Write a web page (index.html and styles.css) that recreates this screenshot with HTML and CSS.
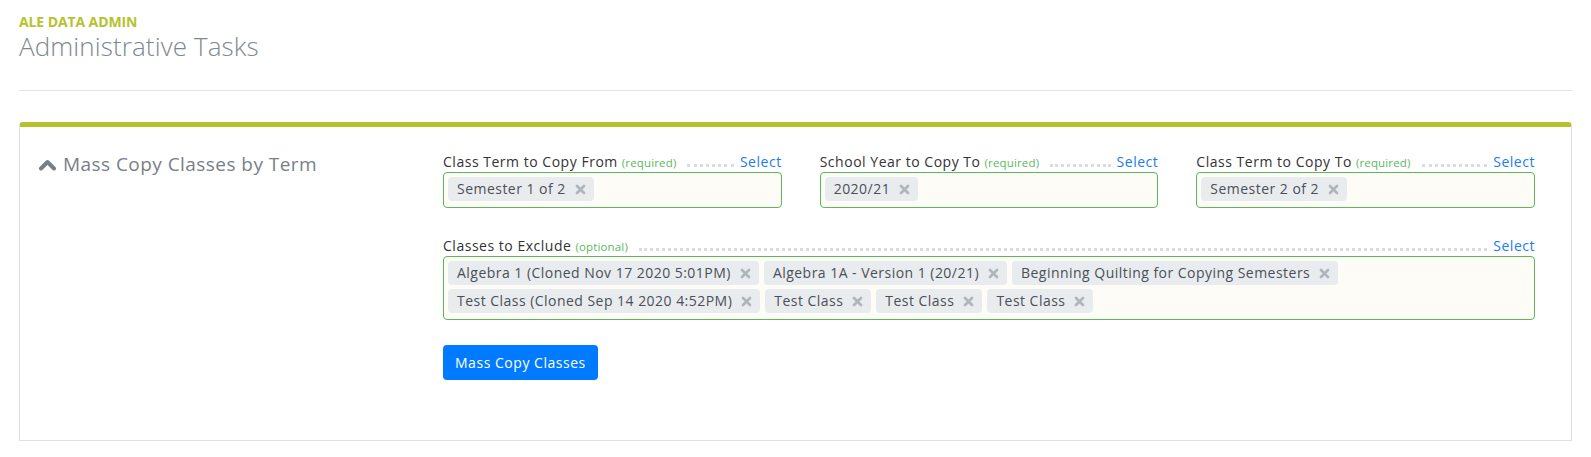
FILE: index.html
```html
<!DOCTYPE html>
<html lang="en">
<head>
<meta charset="utf-8">
<title>Administrative Tasks</title>
<link rel="stylesheet" href="styles.css">
</head>
<body>
<div class="page">
  <header class="page-header">
    <div class="eyebrow">ALE DATA ADMIN</div>
    <h1 class="page-title">Administrative Tasks</h1>
  </header>
  <hr class="divider">
  <section class="card">
    <div class="card-side">
      <h2 class="card-title">
        <svg class="chevron" width="19" height="12" viewBox="0 0 19 12"><polyline points="3,9.5 9.5,3 16,9.5" fill="none" stroke="currentColor" stroke-width="4" stroke-linecap="round" stroke-linejoin="round"/></svg>
        <span>Mass Copy Classes by Term</span>
      </h2>
    </div>
    <div class="card-body">
      <div class="field-row">
        <div class="field">
          <div class="field-label"><span class="label-text">Class Term to Copy From</span><span class="hint">(required)</span><span class="leader"></span><a class="select-link">Select</a></div>
          <div class="tag-box">
            <span class="tag">Semester 1 of 2<svg class="x" width="11" height="11" viewBox="0 0 11 11"><path d="M2 2L9 9M9 2L2 9" stroke="currentColor" stroke-width="2.7" stroke-linecap="round"/></svg></span>
          </div>
        </div>
        <div class="field">
          <div class="field-label"><span class="label-text">School Year to Copy To</span><span class="hint">(required)</span><span class="leader"></span><a class="select-link">Select</a></div>
          <div class="tag-box">
            <span class="tag">2020/21<svg class="x" width="11" height="11" viewBox="0 0 11 11"><path d="M2 2L9 9M9 2L2 9" stroke="currentColor" stroke-width="2.7" stroke-linecap="round"/></svg></span>
          </div>
        </div>
        <div class="field">
          <div class="field-label"><span class="label-text">Class Term to Copy To</span><span class="hint">(required)</span><span class="leader"></span><a class="select-link">Select</a></div>
          <div class="tag-box">
            <span class="tag">Semester 2 of 2<svg class="x" width="11" height="11" viewBox="0 0 11 11"><path d="M2 2L9 9M9 2L2 9" stroke="currentColor" stroke-width="2.7" stroke-linecap="round"/></svg></span>
          </div>
        </div>
      </div>
      <div class="field field-wide">
        <div class="field-label"><span class="label-text">Classes to Exclude</span><span class="hint">(optional)</span><span class="leader"></span><a class="select-link">Select</a></div>
        <div class="tag-box">
          <span class="tag">Algebra 1 (Cloned Nov 17 2020 5:01PM)<svg class="x" width="11" height="11" viewBox="0 0 11 11"><path d="M2 2L9 9M9 2L2 9" stroke="currentColor" stroke-width="2.7" stroke-linecap="round"/></svg></span>
          <span class="tag">Algebra 1A - Version 1 (20/21)<svg class="x" width="11" height="11" viewBox="0 0 11 11"><path d="M2 2L9 9M9 2L2 9" stroke="currentColor" stroke-width="2.7" stroke-linecap="round"/></svg></span>
          <span class="tag">Beginning Quilting for Copying Semesters<svg class="x" width="11" height="11" viewBox="0 0 11 11"><path d="M2 2L9 9M9 2L2 9" stroke="currentColor" stroke-width="2.7" stroke-linecap="round"/></svg></span>
          <span class="tag">Test Class (Cloned Sep 14 2020 4:52PM)<svg class="x" width="11" height="11" viewBox="0 0 11 11"><path d="M2 2L9 9M9 2L2 9" stroke="currentColor" stroke-width="2.7" stroke-linecap="round"/></svg></span>
          <span class="tag">Test Class<svg class="x" width="11" height="11" viewBox="0 0 11 11"><path d="M2 2L9 9M9 2L2 9" stroke="currentColor" stroke-width="2.7" stroke-linecap="round"/></svg></span>
          <span class="tag">Test Class<svg class="x" width="11" height="11" viewBox="0 0 11 11"><path d="M2 2L9 9M9 2L2 9" stroke="currentColor" stroke-width="2.7" stroke-linecap="round"/></svg></span>
          <span class="tag">Test Class<svg class="x" width="11" height="11" viewBox="0 0 11 11"><path d="M2 2L9 9M9 2L2 9" stroke="currentColor" stroke-width="2.7" stroke-linecap="round"/></svg></span>
        </div>
      </div>
      <div class="actions">
        <button class="btn-primary" type="button">Mass Copy Classes</button>
      </div>
    </div>
  </section>
</div>
</body>
</html>
```

FILE: styles.css
```css
* { box-sizing: border-box; }

html, body {
  margin: 0;
  padding: 0;
  background: #ffffff;
  font-family: "Open Sans", "Liberation Sans", sans-serif;
  color: #333333;
}

.page {
  padding: 13px 19px 0 19px;
}

.eyebrow {
  font-size: 14px;
  line-height: 18px;
  font-weight: 700;
  color: #b6c22c;
  letter-spacing: -0.1px;
}

.page-title {
  margin: 0;
  font-size: 26px;
  line-height: 30px;
  font-weight: 300;
  color: #7f8890;
  letter-spacing: 0.1px;
}

.divider {
  margin: 29px 0 0 0;
  border: 0;
  border-top: 1px solid #e2e2e2;
  height: 0;
}

.card {
  margin-top: 31px;
  border: 1px solid #e0e0e0;
  border-top: 5px solid #b6c22c;
  border-radius: 4px 4px 0 0;
  padding: 24px 36px 60px 18px;
  display: grid;
  grid-template-columns: 405px 1fr;
}

.card-title {
  margin: 0;
  display: flex;
  align-items: center;
  gap: 6px;
  font-size: 19px;
  line-height: 27px;
  font-weight: 400;
  color: #778089;
  letter-spacing: 0.45px;
}

.chevron {
  color: #778089;
  margin-top: 1px;
}

.card-body {
  display: flex;
  flex-direction: column;
}

.field-row {
  display: grid;
  grid-template-columns: 1fr 1fr 1fr;
  column-gap: 38px;
}

.field-wide {
  margin-top: 27px;
}

.field-label {
  display: flex;
  align-items: baseline;
  height: 21px;
  font-size: 14px;
  line-height: 21px;
  letter-spacing: 0.52px;
}

.label-text {
  color: #333333;
}

.hint {
  margin-left: 4px;
  font-size: 11.5px;
  letter-spacing: 0.15px;
  color: #5cb85c;
}

.leader {
  flex: 1;
  margin: 0 6px 0 11px;
  border-bottom: 3px dotted #dcdcdc;
  height: 3px;
}

.select-link {
  color: #1a7cf5;
  cursor: pointer;
}

.tag-box {
  border: 1px solid #5cb85c;
  border-radius: 4px;
  background: #fdfcf7;
  padding: 2px 4px 4px 4px;
  display: flex;
  flex-wrap: wrap;
  min-height: 36px;
}

.tag {
  display: inline-flex;
  align-items: center;
  height: 24px;
  margin: 2px 5px 2px 0;
  padding: 0 8px 0 9px;
  background: #e9ecef;
  border-radius: 4px;
  font-size: 14px;
  line-height: 24px;
  letter-spacing: 0.47px;
  color: #495057;
  white-space: nowrap;
}

.x {
  margin-left: 9px;
  color: #adb5bd;
}

.actions {
  margin-top: 25px;
}

.btn-primary {
  font-family: "Open Sans", "Liberation Sans", sans-serif;
  font-size: 14px;
  line-height: 21px;
  letter-spacing: 0.53px;
  padding: 7px 12px;
  border: 0;
  border-radius: 4px;
  background: #007bff;
  color: #ffffff;
  cursor: pointer;
}
```
